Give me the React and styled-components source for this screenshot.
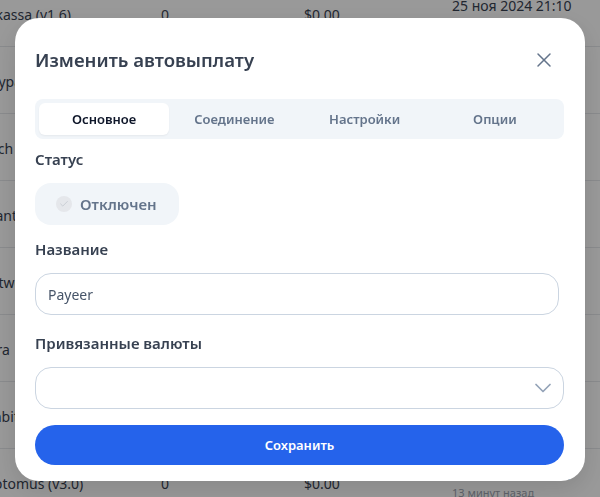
import React from 'react';
import styled, { createGlobalStyle } from 'styled-components';
import { X, ChevronDown, Check } from 'lucide-react';

const GlobalStyle = createGlobalStyle`
    html, body {
        margin: 0;
        padding: 0;
        height: 100%;
        overflow: hidden;
        background: #fff;
        font-family: "Noto Sans", "Open Sans", sans-serif;
    }
`;

const Page = styled.div`
    width: 600px;
    height: 497px;
    overflow: hidden;
`;

const Table = styled.div`
    margin-top: -20px;
    margin-left: -28px;
    color: #374151;
    font-size: 14px;
`;

const Row = styled.div`
    display: grid;
    grid-template-columns: 189px 143px 148px 1fr;
    height: 64px;
    padding-top: 2px;
    border-bottom: 1px solid #e5e7eb;
    align-items: center;
    white-space: nowrap;
`;

const DateCell = styled.div`
    display: flex;
    flex-direction: column;
    gap: 1px;
    margin-top: 2px;
    line-height: 17px;
`;

const Ago = styled.span`
    font-size: 11px;
    color: #9ca3af;
    line-height: 18px;
`;

const Overlay = styled.div`
    position: fixed;
    inset: 0;
    background: rgba(0, 0, 0, 0.4);
`;

const Modal = styled.div`
    position: fixed;
    left: 15px;
    top: 18px;
    width: 570px;
    height: 463px;
    box-sizing: border-box;
    padding: 20px 21px 16px 20px;
    background: #fff;
    border-radius: 24px;
    box-shadow: 0 8px 24px rgba(0, 0, 0, 0.12);
    display: flex;
    flex-direction: column;
`;

const Header = styled.div`
    display: flex;
    align-items: center;
    justify-content: space-between;
    height: 44px;
    margin-bottom: 17px;
`;

const Title = styled.h2`
    margin: 0 0 2px;
    font-size: 18.6px;
    font-weight: 600;
    color: #374151;
`;

const CloseButton = styled.button`
    display: flex;
    width: 24px;
    height: 24px;
    padding: 0;
    margin-right: 8px;
    border: 0;
    background: none;
    color: #64748b;
`;

const Tabs = styled.div`
    display: grid;
    grid-template-columns: repeat(4, 1fr);
    padding: 4px;
    height: 40px;
    box-sizing: border-box;
    border-radius: 8px;
    background: #f1f5f9;
`;

const Tab = styled.div`
    display: flex;
    align-items: center;
    justify-content: center;
    font-size: 13px;
    font-weight: 600;
    border-radius: 6px;
    color: ${(p) => (p.$active ? '#0f172a' : '#64748b')};
    background: ${(p) => (p.$active ? '#fff' : 'transparent')};
    box-shadow: ${(p) => (p.$active ? '0 1px 2px rgba(0, 0, 0, 0.05)' : 'none')};
`;

const Label = styled.div`
    font-size: 15px;
    font-weight: 600;
    line-height: 20px;
    color: #374151;
`;

const StatusLabel = styled(Label)`
    margin-top: 10px;
`;

const StatusPill = styled.div`
    display: flex;
    align-items: center;
    gap: 8px;
    width: 144px;
    height: 42px;
    box-sizing: border-box;
    margin-top: 14px;
    padding-left: 21px;
    border-radius: 16px;
    background: #f1f5f9;
    color: #64748b;
    font-size: 15px;
    font-weight: 600;
`;

const CheckCircle = styled.span`
    display: flex;
    align-items: center;
    justify-content: center;
    width: 16px;
    height: 16px;
    border-radius: 50%;
    background: #e5e7eb;
    color: #c4c9d0;
`;

const NameLabel = styled(Label)`
    margin: 14px 0 1px;
`;

const Input = styled.div`
    display: flex;
    align-items: center;
    justify-content: ${(p) => (p.$select ? 'flex-end' : 'flex-start')};
    width: ${(p) => (p.$select ? '100%' : '524px')};
    height: 42px;
    box-sizing: border-box;
    margin-top: 13px;
    padding: 0 ${(p) => (p.$select ? '6px' : '12px')};
    border: 1px solid #cbd5e1;
    border-radius: 16px;
    color: #475569;
    font-size: 14px;
`;

const CurrencyLabel = styled(Label)`
    margin: 18px 0 1px;
`;

const SaveButton = styled.button`
    height: 40px;
    margin-top: 16px;
    border: 0;
    border-radius: 20px;
    background: #2563eb;
    color: #fff;
    font-family: inherit;
    font-size: 13px;
    font-weight: 600;
`;

const rows = [
    ['Paykassa (v1.6)', '25 ноя 2024 21:10', '1 год назад'],
    ['Merypay', '', ''],
    ['Bitech', '', ''],
    ['Payant', '', ''],
    ['Mertwo', '', ''],
    ['Zebra', '', ''],
    ['Coinbit', '', ''],
    ['Cryptomus (v3.0)', '25 ноя 2024 21:10', '13 минут назад'],
];

const App = () => (
    <Page>
        <GlobalStyle />
        <Table>
            {rows.map(([name, date, ago]) => (
                <Row key={name}>
                    <div>{name}</div>
                    <div>0</div>
                    <div>$0.00</div>
                    <DateCell>
                        <span>{date || '25 ноя 2024 21:10'}</span>
                        <Ago>{ago || '13 минут назад'}</Ago>
                    </DateCell>
                </Row>
            ))}
        </Table>
        <Overlay />
        <Modal>
            <Header>
                <Title>Изменить автовыплату</Title>
                <CloseButton>
                    <X size={24} strokeWidth={1.5} />
                </CloseButton>
            </Header>
            <Tabs>
                <Tab $active>Основное</Tab>
                <Tab>Соединение</Tab>
                <Tab>Настройки</Tab>
                <Tab>Опции</Tab>
            </Tabs>
            <StatusLabel>Статус</StatusLabel>
            <StatusPill>
                <CheckCircle>
                    <Check size={10} strokeWidth={2} />
                </CheckCircle>
                Отключен
            </StatusPill>
            <NameLabel>Название</NameLabel>
            <Input>Payeer</Input>
            <CurrencyLabel>Привязанные валюты</CurrencyLabel>
            <Input $select>
                <ChevronDown size={28} strokeWidth={1.5} color="#94a3b8" />
            </Input>
            <SaveButton>Сохранить</SaveButton>
        </Modal>
    </Page>
);

export default App;
